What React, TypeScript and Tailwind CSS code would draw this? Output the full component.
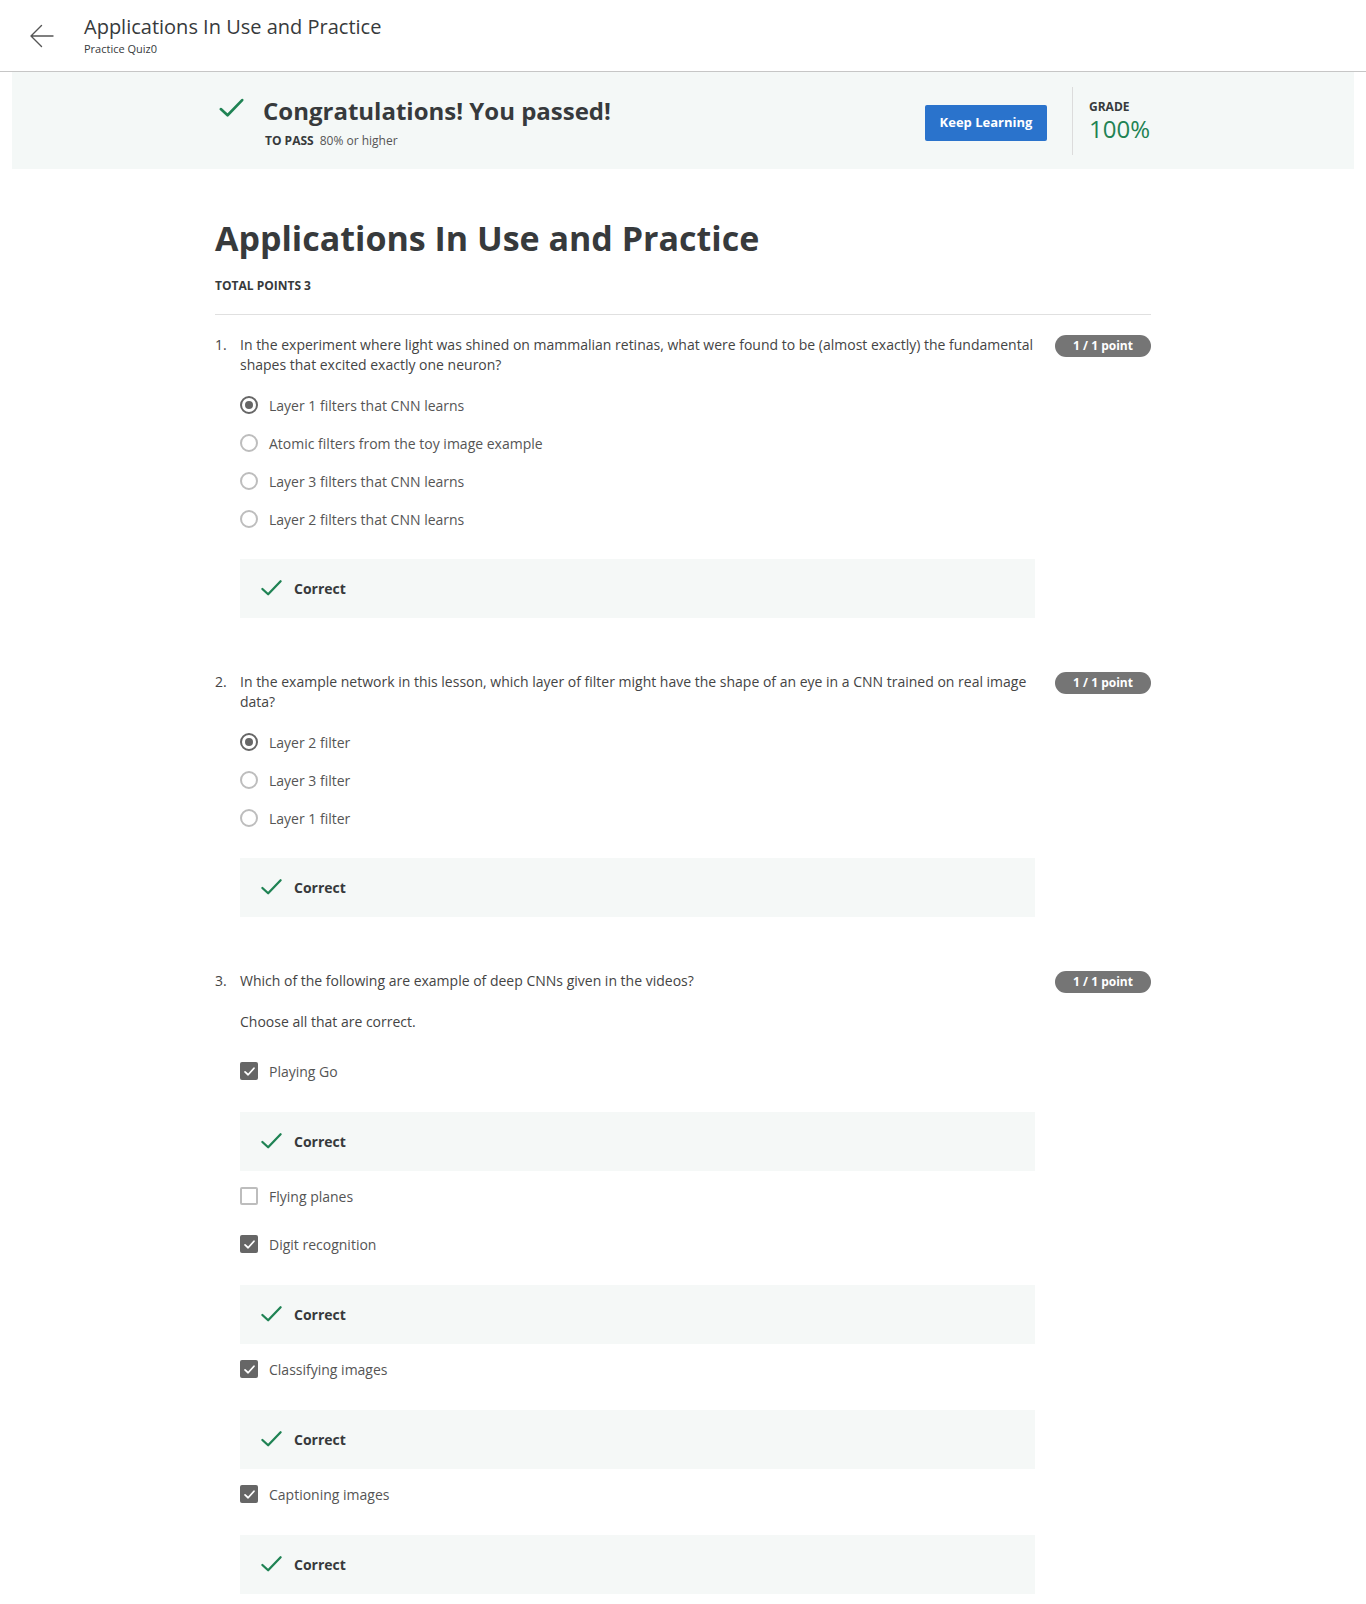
import React from "react";

type Option = {
  label: string;
  selected?: boolean;
  correct?: boolean;
};

type Question = {
  num: number;
  text: string;
  hint?: string;
  multi?: boolean;
  options: Option[];
};

const questions: Question[] = [
  {
    num: 1,
    text: "In the experiment where light was shined on mammalian retinas, what were found to be (almost exactly) the fundamental shapes that excited exactly one neuron?",
    options: [
      { label: "Layer 1 filters that CNN learns", selected: true },
      { label: "Atomic filters from the toy image example" },
      { label: "Layer 3 filters that CNN learns" },
      { label: "Layer 2 filters that CNN learns" },
    ],
  },
  {
    num: 2,
    text: "In the example network in this lesson, which layer of filter might have the shape of an eye in a CNN trained on real image data?",
    options: [
      { label: "Layer 2 filter", selected: true },
      { label: "Layer 3 filter" },
      { label: "Layer 1 filter" },
    ],
  },
  {
    num: 3,
    text: "Which of the following are example of deep CNNs given in the videos?",
    hint: "Choose all that are correct.",
    multi: true,
    options: [
      { label: "Playing Go", selected: true, correct: true },
      { label: "Flying planes" },
      { label: "Digit recognition", selected: true, correct: true },
      { label: "Classifying images", selected: true, correct: true },
      { label: "Captioning images", selected: true, correct: true },
    ],
  },
];

const CheckMark = ({ className }: { className?: string }) => (
  <svg viewBox="0 0 24 24" className={className} fill="none">
    <path d="M2.5 12.5 L8.5 18 L21.5 4.5" stroke="#1f8354" strokeWidth="2.4" strokeLinecap="round" strokeLinejoin="round" />
  </svg>
);

const Radio = ({ on }: { on?: boolean }) => (
  <span
    className={`w-[18px] h-[18px] rounded-full border-2 flex items-center justify-center shrink-0 ${
      on ? "border-[#666]" : "border-[#bdbdbd]"
    }`}
  >
    {on && <span className="w-[8px] h-[8px] rounded-full bg-[#666]" />}
  </span>
);

const Checkbox = ({ on }: { on?: boolean }) =>
  on ? (
    <span className="w-[18px] h-[18px] rounded-[2px] bg-[#666] flex items-center justify-center shrink-0">
      <svg viewBox="0 0 16 16" className="w-[13px] h-[13px]" fill="none">
        <path d="M2.5 8.5 L6.3 12 L13.5 4" stroke="#fff" strokeWidth="2.2" strokeLinecap="round" strokeLinejoin="round" />
      </svg>
    </span>
  ) : (
    <span className="w-[18px] h-[18px] rounded-[2px] border-2 border-[#bdbdbd] shrink-0" />
  );

const Feedback = () => (
  <div className="w-[795px] h-[59px] bg-[#f5f8f7] flex items-center pl-[20px]">
    <CheckMark className="w-[23px] h-[23px]" />
    <span className="ml-[11px] text-[14px] font-bold text-[#373a3c]">Correct</span>
  </div>
);

const QuestionBlock = ({ q }: { q: Question }) => (
  <div className="flex mb-[54px]">
    <div className="w-[25px] shrink-0 text-[14px] leading-[20px] text-[#444]">{q.num}.</div>
    <div className="w-[795px] shrink-0">
      <p className="text-[14px] leading-[20px] text-[#444]">{q.text}</p>
      {q.hint && <p className="mt-[21px] text-[14px] leading-[20px] text-[#444]">{q.hint}</p>}

      {q.multi ? (
        <div className="mt-[20px]">
          {q.options.map((o) => (
            <div key={o.label}>
              <div className={`h-[38px] flex items-center ${o.correct ? "" : "mb-[10px]"}`}>
                <Checkbox on={o.selected} />
                <span className="ml-[11px] text-[14px] text-[#555]">{o.label}</span>
              </div>
              {o.correct && (
                <div className="mt-[22px] mb-[6px]">
                  <Feedback />
                </div>
              )}
            </div>
          ))}
        </div>
      ) : (
        <>
          <div className="mt-[11px]">
            {q.options.map((o) => (
              <div key={o.label} className="h-[38px] flex items-center">
                <Radio on={o.selected} />
                <span className="ml-[11px] text-[14px] text-[#555]">{o.label}</span>
              </div>
            ))}
          </div>
          <div className="mt-[21px]">
            <Feedback />
          </div>
        </>
      )}
    </div>
    <div className="ml-[20px] w-[96px] shrink-0">
      <span className="h-[22px] w-[96px] rounded-full bg-[#757575] text-white text-[12px] font-bold flex items-center justify-center">
        1 / 1 point
      </span>
    </div>
  </div>
);

export default function App() {
  return (
    <div className="min-h-[1604px] bg-white text-[#373a3c]" style={{ fontFamily: '"Open Sans", "Noto Sans", sans-serif' }}>
      {/* header */}
      <header className="h-[72px] border-b border-[#c6c6c6] flex items-center">
        <button className="ml-[29px] w-[26px] h-[26px] flex items-center justify-center">
          <svg viewBox="0 0 26 26" className="w-[26px] h-[26px]" fill="none">
            <path d="M24 13 H3 M12.5 2.5 L2 13 L12.5 23.5" stroke="#555" strokeWidth="1.4" strokeLinecap="round" strokeLinejoin="round" />
          </svg>
        </button>
        <div className="ml-[29px] -mt-[1px]">
          <h1 className="text-[20px] leading-[26px] text-[#373a3c]">Applications In Use and Practice</h1>
          <p className="mt-[2px] text-[11px] leading-[14px] text-[#373a3c]">Practice Quiz0</p>
        </div>
      </header>

      {/* result banner */}
      <div className="mx-[12px] h-[97px] bg-[#f4f8f7]">
        <div className="w-[936px] mx-auto h-full flex items-center">
          <CheckMark className="ml-[3px] w-[27px] h-[27px] -mt-[24px]" />
          <div className="ml-[18px] mt-[2px]">
            <h2 className="text-[24px] leading-[32px] font-bold text-[#373a3c]">Congratulations! You passed!</h2>
            <p className="ml-[2px] mt-[6px] text-[12px] leading-[16px]">
              <span className="font-bold">TO PASS</span>
              <span className="ml-[6px] text-[#555]">80% or higher</span>
            </p>
          </div>
          <div className="flex-1" />
          <button className="mt-[4px] w-[122px] h-[36px] rounded-[2px] bg-[#2a73cc] text-white text-[13px] font-bold">
            Keep Learning
          </button>
          <div className="ml-[25px] w-px h-[68px] bg-[#dcdcdc]" />
          <div className="ml-[16px] w-[62px]">
            <div className="text-[12px] leading-[16px] font-bold text-[#373a3c]">GRADE</div>
            <div className="text-[24px] leading-[28px] text-[#1f8354]">100%</div>
          </div>
        </div>
      </div>

      {/* quiz */}
      <main className="w-[936px] mx-auto">
        <h1 className="mt-[45px] text-[34px] leading-[48px] font-bold text-[#373a3c]">Applications In Use and Practice</h1>
        <div className="mt-[16px] text-[12px] leading-[16px] font-bold text-[#373a3c]">TOTAL POINTS 3</div>
        <div className="mt-[20px] border-t border-[#e0e0e0]" />
        <div className="pt-[20px]">
          {questions.map((q) => (
            <QuestionBlock key={q.num} q={q} />
          ))}
        </div>
      </main>
    </div>
  );
}
